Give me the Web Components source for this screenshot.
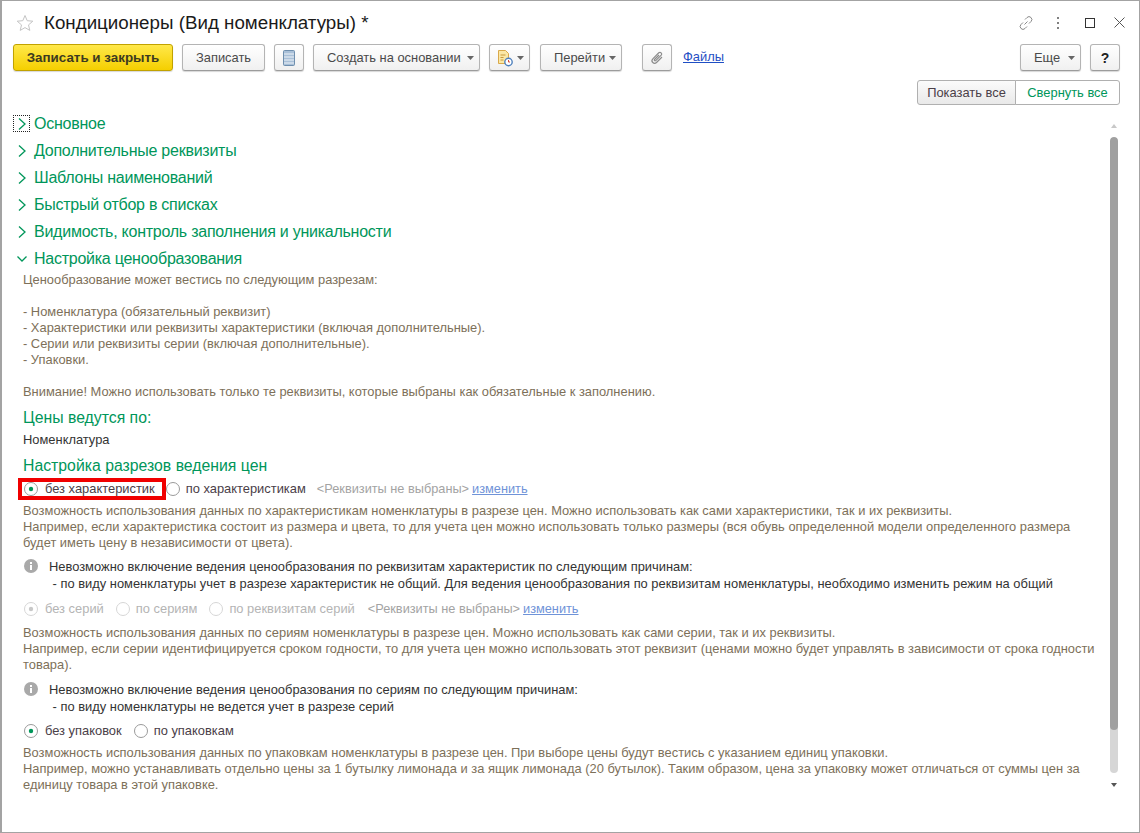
<!DOCTYPE html>
<html lang="ru">
<head>
<meta charset="utf-8">
<title>Кондиционеры (Вид номенклатуры)</title>
<style>
  html, body { margin: 0; height: 100%; background: #fff; }
  body { font: 12.9px/16px "Liberation Sans", Arial, sans-serif; color: #333; }
</style>
</head>
<body>

<app-window>
  <form-header slot="top" title-text="Кондиционеры (Вид номенклатуры) *"></form-header>
  <main-toolbar slot="top"></main-toolbar>
  <section-switch slot="top"></section-switch>

  <collapse-group focused>Основное</collapse-group>
  <collapse-group>Дополнительные реквизиты</collapse-group>
  <collapse-group>Шаблоны наименований</collapse-group>
  <collapse-group>Быстрый отбор в списках</collapse-group>
  <collapse-group>Видимость, контроль заполнения и уникальности</collapse-group>
  <collapse-group open>Настройка ценообразования</collapse-group>

  <note-text>Ценообразование может вестись по следующим разрезам:<br><br>- Номенклатура (обязательный реквизит)<br>- Характеристики или реквизиты характеристики (включая дополнительные).<br>- Серии или реквизиты серии (включая дополнительные).<br>- Упаковки.<br><br>Внимание! Можно использовать только те реквизиты, которые выбраны как обязательные к заполнению.</note-text>

  <sub-title style="margin-top:9px">Цены ведутся по:</sub-title>
  <plain-value style="margin-top:5px">Номенклатура</plain-value>
  <sub-title style="margin-top:9px">Настройка разрезов ведения цен</sub-title>

  <radio-row style="margin-top:4px">
    <radio-item checked marked>без характеристик</radio-item>
    <radio-item>по характеристикам</radio-item>
    <attr-link style="margin-left:-1px">&lt;Реквизиты не выбраны&gt;</attr-link>
  </radio-row>
  <note-text style="margin-top:4px">Возможность использования данных по характеристикам номенклатуры в разрезе цен. Можно использовать как сами характеристики, так и их реквизиты.<br>Например, если характеристика состоит из размера и цвета, то для учета цен можно использовать только размеры (вся обувь определенной модели определенного размера<br>будет иметь цену в независимости от цвета).</note-text>
  <info-message style="margin-top:7px">Невозможно включение ведения ценообразования по реквизитам характеристик по следующим причинам:<br>&nbsp;- по виду номенклатуры учет в разрезе характеристик не общий. Для ведения ценообразования по реквизитам номенклатуры, необходимо изменить режим на общий</info-message>

  <radio-row style="margin-top:7px">
    <radio-item checked disabled>без серий</radio-item>
    <radio-item disabled>по сериям</radio-item>
    <radio-item disabled>по реквизитам серий</radio-item>
    <attr-link>&lt;Реквизиты не выбраны&gt;</attr-link>
  </radio-row>
  <note-text style="margin-top:6px">Возможность использования данных по сериям номенклатуры в разрезе цен. Можно использовать как сами серии, так и их реквизиты.<br>Например, если серии идентифицируется сроком годности, то для учета цен можно использовать этот реквизит (ценами можно будет управлять в зависимости от срока годности<br>товара).</note-text>
  <info-message style="margin-top:8px">Невозможно включение ведения ценообразования по сериям по следующим причинам:<br>&nbsp;- по виду номенклатуры не ведется учет в разрезе серий</info-message>

  <radio-row style="margin-top:6px">
    <radio-item checked>без упаковок</radio-item>
    <radio-item>по упаковкам</radio-item>
  </radio-row>
  <note-text style="margin-top:4px">Возможность использования данных по упаковкам номенклатуры в разрезе цен. При выборе цены будут вестись с указанием единиц упаковки.<br>Например, можно устанавливать отдельно цены за 1 бутылку лимонада и за ящик лимонада (20 бутылок). Таким образом, цена за упаковку может отличаться от суммы цен за<br>единицу товара в этой упаковке.</note-text>
</app-window>

<script>
const ARROW = `<svg width="7" height="4" viewBox="0 0 7 4"><path d="M0 0h7L3.5 4z" fill="#666"/></svg>`;

class AppWindow extends HTMLElement {
  constructor() {
    super();
    this.attachShadow({ mode: 'open' });
  }
  connectedCallback() {
    this.shadowRoot.innerHTML = `
      <style>
        :host { display: flex; flex-direction: column; box-sizing: border-box; height: 833px; border: 1px solid #a3a3a3; border-left-width: 2px; overflow: hidden; }
        .body { flex: 1; display: flex; min-height: 0; margin-top: 5px; }
        .content { flex: 1; min-width: 0; padding: 0 0 0 14px; }
      </style>
      <slot name="top"></slot>
      <div class="body">
        <div class="content"><slot></slot></div>
        <v-scrollbar></v-scrollbar>
      </div>`;
  }
}

class FormHeader extends HTMLElement {
  constructor() {
    super();
    this.attachShadow({ mode: 'open' });
  }
  connectedCallback() {
    this.shadowRoot.innerHTML = `
      <style>
        :host { display: flex; align-items: center; height: 43px; padding: 0 14px 0 14px; }
        .star { margin-right: 10px; }
        h1 { flex: 1; margin: 0; font: 18.75px/24px "Liberation Sans", Arial, sans-serif; color: #1a1a1a; white-space: nowrap; }
        .tools { display: flex; align-items: center; }
        svg { display: block; }
      </style>
      <svg class="star" width="18" height="18" viewBox="0 0 18 18"><path d="M9 1.5l2.2 5.2 5.6.5-4.3 3.7 1.3 5.5L9 13.6l-4.8 2.8 1.3-5.5-4.3-3.7 5.6-.5z" fill="none" stroke="#c4c4c4"/></svg>
      <h1>${this.getAttribute('title-text')}</h1>
      <div class="tools">
        <svg width="16" height="16" viewBox="0 0 16 16" fill="none" stroke="#8a8a8a" stroke-width="1"><path d="M6.5 9.5l3-3M7 4.5l2-2a2.8 2.8 0 014 4l-2 2M9 11.5l-2 2a2.8 2.8 0 01-4-4l2-2"/></svg>
        <svg width="4" height="12" viewBox="0 0 4 12" style="margin-left:22px" fill="#808080"><rect x="1" y="0" width="2" height="2"/><rect x="1" y="5" width="2" height="2"/><rect x="1" y="10" width="2" height="2"/></svg>
        <svg width="10" height="10" viewBox="0 0 10 10" style="margin-left:25px"><rect x=".5" y=".5" width="9" height="9" fill="none" stroke="#333"/></svg>
        <svg width="11" height="11" viewBox="0 0 11 11" style="margin-left:19px"><path d="M.5.5l10 10M10.5.5l-10 10" stroke="#555" fill="none"/></svg>
      </div>`;
  }
}

class UiButton extends HTMLElement {
  constructor() {
    super();
    this.attachShadow({ mode: 'open' });
  }
  connectedCallback() {
    this.shadowRoot.innerHTML = `
      <style>
        :host { display: inline-flex; align-items: center; justify-content: center; box-sizing: border-box; height: 27px; border: 1px solid #b4b4b4; border-bottom-color: #9c9c9c; border-radius: 3px; background: linear-gradient(#fff, #f0f0f0); box-shadow: 0 1px 1px rgba(0,0,0,.16); color: #4a4a4a; white-space: nowrap; }
        :host([menu]) { justify-content: space-between; padding: 0 5px 0 13px; }
        :host([primary]) { border-color: #c1a200; background: linear-gradient(#ffe84a, #f5cf00); color: #3c3a20; font-weight: bold; font-size: 13.4px; }
        :host([strong]) { color: #222; font-weight: bold; font-size: 14px; }
        svg, ::slotted(svg) { display: block; flex: none; }
      </style>
      <slot></slot>${this.hasAttribute('menu') ? ARROW : ''}`;
  }
}

class MainToolbar extends HTMLElement {
  constructor() {
    super();
    this.attachShadow({ mode: 'open' });
  }
  connectedCallback() {
    this.shadowRoot.innerHTML = `
      <style>
        :host { display: flex; align-items: flex-start; height: 27px; padding: 0 19px 0 11px; }
        .gap { flex: 1; }
        ui-button { margin-right: 9px; }
        ui-button:last-child { margin-right: 0; }
        a { color: #1f4fc4; text-decoration: underline; margin: 5px 0 0 2px; }
      </style>
      <ui-button primary style="width:160px">Записать и закрыть</ui-button>
      <ui-button style="width:83px">Записать</ui-button>
      <ui-button style="width:30px">
        <svg width="12" height="16" viewBox="0 0 12 16"><rect x=".5" y=".5" width="11" height="15" rx="1" fill="#a9c0d8" stroke="#6f8fae"/><path d="M1 4h10M1 7h10M1 10h10M1 13h10" stroke="#eef3f8"/></svg>
      </ui-button>
      <ui-button menu style="width:167px">Создать на основании</ui-button>
      <ui-button menu style="width:41px;margin-right:10px;padding-left:7px">
        <svg width="16" height="18" viewBox="0 0 16 18"><path d="M1.5 1.5h7l3 3v10h-10z" fill="#fbe8a6" stroke="#d9a94a"/><path d="M3.5 6h5M3.5 8.5h3M3.5 11h3" stroke="#c89a3c"/><circle cx="11.5" cy="13" r="3.7" fill="#fff" stroke="#4f81bd" stroke-width="1.4"/><path d="M11.5 11v2h1.5" stroke="#d04a3a" fill="none"/></svg>
      </ui-button>
      <ui-button menu style="width:82px;margin-right:20px">Перейти</ui-button>
      <ui-button style="width:30px">
        <svg width="16" height="16" viewBox="0 0 16 16"><path d="M13 7l-5.5 5.5a2.6 2.6 0 01-3.7-3.7l6-6a1.7 1.7 0 012.4 2.4l-5.5 5.5a.8.8 0 01-1.2-1.2L10 5" fill="none" stroke="#8c8c8c" stroke-width="1.2"/></svg>
      </ui-button>
      <a>Файлы</a>
      <span class="gap"></span>
      <ui-button menu style="width:61px">Еще</ui-button>
      <ui-button strong style="width:30px">?</ui-button>`;
  }
}

class SectionSwitch extends HTMLElement {
  constructor() {
    super();
    this.attachShadow({ mode: 'open' });
  }
  connectedCallback() {
    this.shadowRoot.innerHTML = `
      <style>
        :host { display: flex; justify-content: flex-end; height: 25px; margin-top: 9px; padding-right: 19px; }
        div { display: flex; align-items: center; justify-content: center; box-sizing: border-box; border: 1px solid #b0b0b0; white-space: nowrap; }
        .on { width: 99px; border-radius: 3px 0 0 3px; background: linear-gradient(#fbfbfb, #e9e9e9); color: #4a4048; }
        .off { width: 105px; margin-left: -1px; border-radius: 0 3px 3px 0; background: #fff; color: #00965a; }
      </style>
      <div class="on">Показать все</div>
      <div class="off">Свернуть все</div>`;
  }
}

class CollapseGroup extends HTMLElement {
  constructor() {
    super();
    this.attachShadow({ mode: 'open' });
  }
  connectedCallback() {
    const open = this.hasAttribute('open');
    const path = open ? 'M2.5 4.5l4.5 4.5 4.5-4.5' : 'M4 1.5l6 5.5-6 5.5';
    this.shadowRoot.innerHTML = `
      <style>
        :host { display: flex; align-items: center; height: 27px; font-size: 16px; letter-spacing: -.25px; color: #00965a; white-space: nowrap; }
        .mark { display: flex; align-items: center; justify-content: center; box-sizing: border-box; width: 17px; height: 17px; margin: 0 4px 0 -3px; border: 1px dotted transparent; }
        :host([focused]) .mark { border-color: #222; }
        svg { display: block; }
      </style>
      <span class="mark"><svg width="14" height="14" viewBox="0 0 14 14"><path d="${path}" fill="none" stroke="#00965a" stroke-width="1.3"/></svg></span>
      <slot></slot>`;
  }
}

class NoteText extends HTMLElement {
  constructor() {
    super();
    this.attachShadow({ mode: 'open' });
  }
  connectedCallback() {
    this.shadowRoot.innerHTML = `
      <style>
        :host { display: block; padding-left: 7px; color: #7d7059; white-space: nowrap; line-height: 16px; }
      </style>
      <slot></slot>`;
  }
}

class SubTitle extends HTMLElement {
  constructor() {
    super();
    this.attachShadow({ mode: 'open' });
  }
  connectedCallback() {
    this.shadowRoot.innerHTML = `
      <style>
        :host { display: block; padding-left: 7px; font-size: 15.8px; line-height: 18px; color: #00965a; white-space: nowrap; }
      </style>
      <slot></slot>`;
  }
}

class PlainValue extends HTMLElement {
  constructor() {
    super();
    this.attachShadow({ mode: 'open' });
  }
  connectedCallback() {
    this.shadowRoot.innerHTML = `
      <style>
        :host { display: block; padding-left: 7px; color: #333; line-height: 16px; }
      </style>
      <slot></slot>`;
  }
}

class RadioRow extends HTMLElement {
  constructor() {
    super();
    this.attachShadow({ mode: 'open' });
  }
  connectedCallback() {
    this.shadowRoot.innerHTML = `
      <style>
        :host { display: flex; align-items: center; height: 20px; padding-left: 8px; white-space: nowrap; }
      </style>
      <slot></slot>`;
  }
}

class RadioItem extends HTMLElement {
  constructor() {
    super();
    this.attachShadow({ mode: 'open' });
  }
  connectedCallback() {
    const checked = this.hasAttribute('checked');
    const disabled = this.hasAttribute('disabled');
    const ring = disabled ? '#d6d6d6' : '#9a9a9a';
    const dot = disabled ? '#c8c8c8' : '#00965a';
    this.shadowRoot.innerHTML = `
      <style>
        :host { display: inline-flex; align-items: center; gap: 6px; height: 20px; margin-right: 12px; color: #4a4048; position: relative; }
        :host([checked]) { gap: 7px; }
        :host([disabled]) { color: #b4b4b4; }
        :host([marked]) { margin-right: 0; padding-right: 11px; }
        /* red annotation frame drawn over the screenshot */
        :host([marked])::after { content: ""; position: absolute; left: -6px; right: 0; top: -1px; bottom: -1px; border: 4px solid #f00000; }
        svg { display: block; flex: none; }
      </style>
      <svg width="14" height="14" viewBox="0 0 14 14"><circle cx="7" cy="7" r="6.5" fill="#fff" stroke="${ring}"/>${checked ? `<circle cx="7" cy="7" r="2.2" fill="${dot}"/>` : ''}</svg>
      <slot></slot>`;
  }
}

class AttrLink extends HTMLElement {
  constructor() {
    super();
    this.attachShadow({ mode: 'open' });
  }
  connectedCallback() {
    this.shadowRoot.innerHTML = `
      <style>
        :host { display: inline-flex; gap: 3px; margin-left: 1px; font-size: 12.75px; color: #a3a3a3; }
        a { color: #6f93d8; text-decoration: underline; }
      </style>
      <span><slot></slot></span><a>изменить</a>`;
  }
}

class InfoMessage extends HTMLElement {
  constructor() {
    super();
    this.attachShadow({ mode: 'open' });
  }
  connectedCallback() {
    this.shadowRoot.innerHTML = `
      <style>
        :host { display: flex; gap: 11px; padding-left: 8px; color: #333; line-height: 17px; white-space: nowrap; }
        svg { display: block; flex: none; margin-top: 1px; }
      </style>
      <svg width="14" height="14" viewBox="0 0 14 14"><circle cx="7" cy="7" r="7" fill="#a9a9a9"/><rect x="6" y="6" width="2" height="5" fill="#fff"/><rect x="6" y="3" width="2" height="2" fill="#fff"/></svg>
      <div><slot></slot></div>`;
  }
}

class VScrollbar extends HTMLElement {
  constructor() {
    super();
    this.attachShadow({ mode: 'open' });
  }
  connectedCallback() {
    this.shadowRoot.innerHTML = `
      <style>
        :host { display: flex; flex-direction: column; align-items: center; flex: none; width: 8px; height: 663px; margin: 14px 21px 0 0; }
        .up, .down { width: 0; height: 0; border: 3px solid transparent; flex: none; }
        .up { border-top: 0; border-bottom: 4px solid #c8c8c8; }
        .down { border-bottom: 0; border-top: 4px solid #555; margin-top: 10px; }
        .track { flex: 1; width: 8px; margin-top: 9px; border-radius: 4px; background: #d6d6d6; overflow: hidden; }
        .thumb { height: 593px; border-radius: 4px; background: #a0a0a0; }
      </style>
      <span class="up"></span>
      <div class="track"><div class="thumb"></div></div>
      <span class="down"></span>`;
  }
}

customElements.define('app-window', AppWindow);
customElements.define('form-header', FormHeader);
customElements.define('ui-button', UiButton);
customElements.define('main-toolbar', MainToolbar);
customElements.define('section-switch', SectionSwitch);
customElements.define('collapse-group', CollapseGroup);
customElements.define('note-text', NoteText);
customElements.define('sub-title', SubTitle);
customElements.define('plain-value', PlainValue);
customElements.define('radio-row', RadioRow);
customElements.define('radio-item', RadioItem);
customElements.define('attr-link', AttrLink);
customElements.define('info-message', InfoMessage);
customElements.define('v-scrollbar', VScrollbar);
</script>
</body>
</html>
